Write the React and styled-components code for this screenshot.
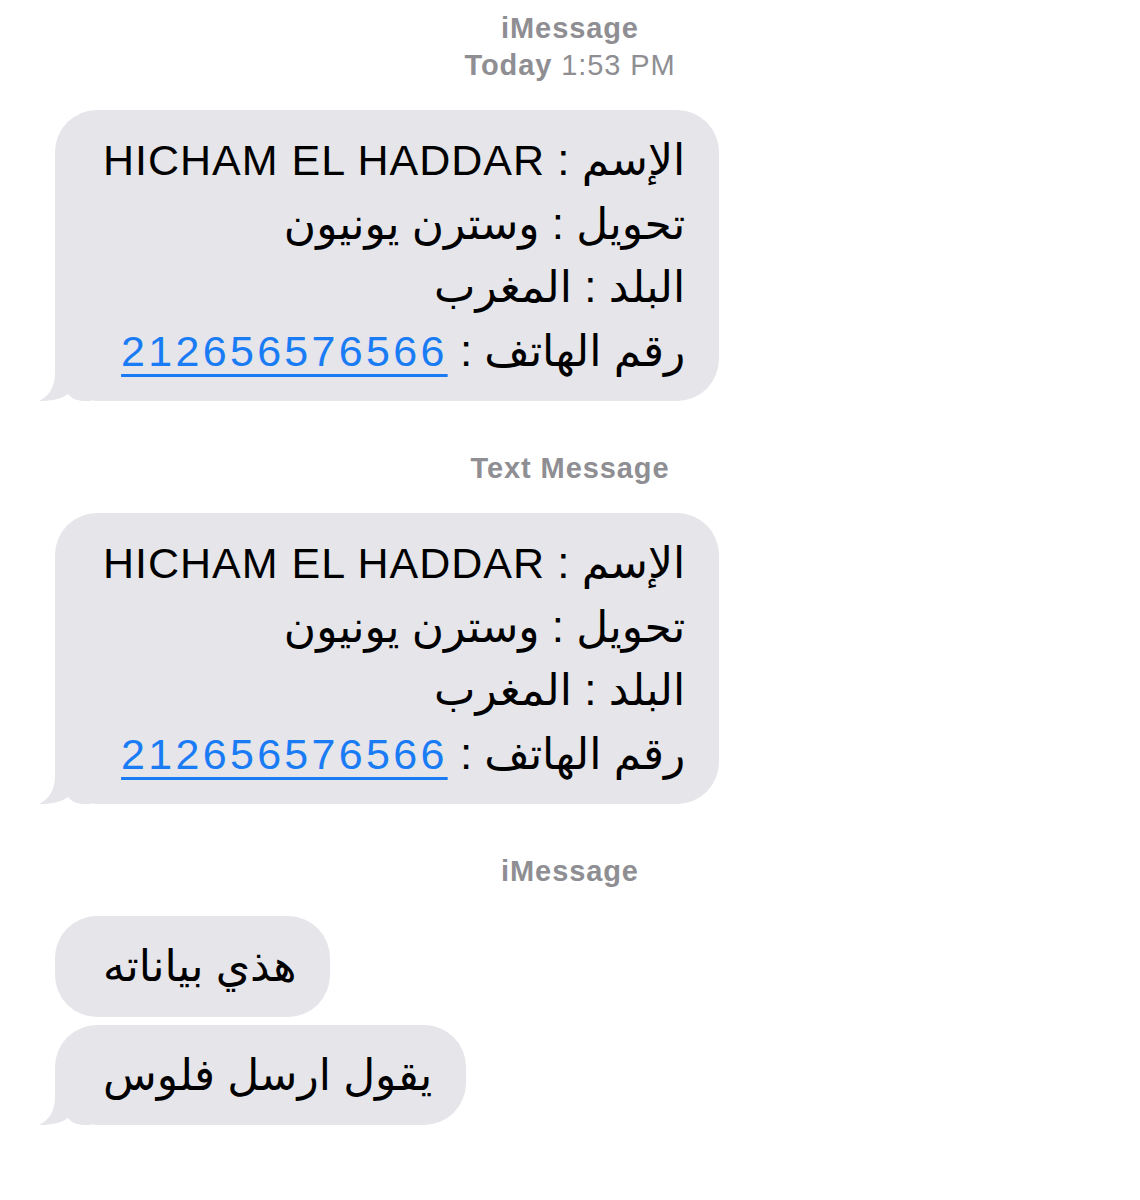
import React from 'react';
import styled, { createGlobalStyle } from 'styled-components';

const GlobalStyle = createGlobalStyle`
  html, body {
    margin: 0;
    padding: 0;
    background: #fff;
  }
  body {
    font-family: "Liberation Sans", "DejaVu Sans", sans-serif;
  }
`;

const details = {
  name: 'HICHAM EL HADDAR',
  transfer: 'وسترن يونيون',
  country: 'المغرب',
  phone: '212656576566',
};

const threads = [
  {
    service: 'iMessage',
    time: { day: 'Today', clock: '1:53 PM' },
    messages: [{ card: details, tail: true }],
  },
  {
    service: 'Text Message',
    messages: [{ card: details, tail: true }],
  },
  {
    service: 'iMessage',
    messages: [
      { text: 'هذي بياناته', tail: false },
      { text: 'يقول ارسل فلوس', tail: true },
    ],
  },
];

const Tail = () => (
  <TailSvg width="52" height="48" viewBox="0 0 52 48">
    <path d="M16 0 H52 V48 H46 C39 48 33 46 29 41 C21 47 10 48 0 48 C10 43 16 34 16 20 Z" />
  </TailSvg>
);

const Card = ({ card }) => (
  <>
    <Line>
      الإسم : <Latin>{card.name}</Latin>
    </Line>
    <Line>تحويل : {card.transfer}</Line>
    <Line>البلد : {card.country}</Line>
    <Line>
      رقم الهاتف : <Phone href="#">{card.phone}</Phone>
    </Line>
  </>
);

const App = () => {
  return (
    <>
      <GlobalStyle />
      <Thread>
        {threads.map((group, gi) => (
          <Group key={gi} $first={gi === 0}>
            <Stamp>
              <Service>{group.service}</Service>
              {group.time && (
                <Time>
                  <b>{group.time.day}</b> {group.time.clock}
                </Time>
              )}
            </Stamp>
            <Bubbles>
              {group.messages.map((msg, mi) => (
                <Bubble key={mi}>
                  {msg.tail && <Tail />}
                  <Body dir="rtl">
                    {msg.card ? <Card card={msg.card} /> : <Line>{msg.text}</Line>}
                  </Body>
                </Bubble>
              ))}
            </Bubbles>
          </Group>
        ))}
      </Thread>
    </>
  );
};

export default App;

const Thread = styled.div`
  display: flex;
  flex-direction: column;
  width: 1140px;
  padding: 10px 0 40px;
  box-sizing: border-box;
`;

const Group = styled.section`
  display: flex;
  flex-direction: column;
  margin-top: ${(p) => (p.$first ? '0' : '49px')};
`;

const Stamp = styled.div`
  display: flex;
  flex-direction: column;
  align-items: center;
  margin-bottom: 26px;
  font-size: 29px;
  line-height: 37px;
  color: #8e8e93;
  letter-spacing: 0.9px;
`;

const Service = styled.div`
  font-weight: 700;
`;

const Time = styled.div`
  b {
    font-weight: 700;
  }
`;

const Bubbles = styled.div`
  display: flex;
  flex-direction: column;
  align-items: flex-start;
  gap: 8px;
  padding-left: 55px;
`;

const Bubble = styled.div`
  position: relative;
  background: #e5e5ea;
  border-radius: 42px;
  padding: 18px 34px 19px 48px;
`;

const TailSvg = styled.svg`
  position: absolute;
  left: -16px;
  bottom: 0;
  fill: #e5e5ea;
`;

const Body = styled.div`
  position: relative;
  font-size: 44px;
  line-height: 63px;
  color: #000;
  text-align: right;
  white-space: nowrap;
`;

const Line = styled.div`
  height: 63.5px;
`;

const Latin = styled.span`
  font-size: 43px;
  letter-spacing: 1px;
`;

const Phone = styled.a`
  display: inline-block;
  direction: ltr;
  font-size: 43px;
  letter-spacing: 3.3px;
  color: #1a7cf5;
  text-decoration: underline;
  text-decoration-thickness: 2.5px;
  text-underline-offset: 8px;
`;
